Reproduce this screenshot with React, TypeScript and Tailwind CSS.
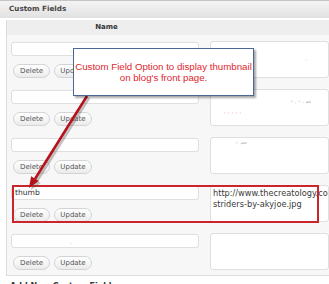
import React from "react";

type Row = {
  name?: string;
  value?: string[];
  nameMark?: string;
  valueMarks?: React.ReactNode;
};

function Button({ label, w }: { label: string; w: string }) {
  return (
    <div
      className={`${w} h-[14px] flex items-center justify-center rounded-full border border-[#d4d4d4] bg-gradient-to-b from-[#ffffff] to-[#ececec] text-[7px] text-[#555]`}
    >
      {label}
    </div>
  );
}

export default function App() {
  const rows: Row[] = [
    {
      nameMark: ".",
      valueMarks: <div className="pl-[94px] pt-[15px] text-[6px] leading-[6px] text-[#aaa]">·</div>,
    },
    {
      valueMarks: (
        <div className="pt-[10px] text-[6px] leading-[6px]">
          <div className="pl-[80px] text-[#999]">'  ·  ʻ  ˑ ᵃᵇ</div>
          <div className="pl-[13px] pt-[4px] text-[#d55]">· · · · ·</div>
        </div>
      ),
    },
    {
      valueMarks: <div className="pl-[25px] pt-[3px] text-[6px] leading-[6px] text-[#999]">'   ·ᵃʷ</div>,
    },
    {
      name: "thumb",
      value: ["http://www.thecreatology.com/", "striders-by-akyjoe.jpg"],
    },
    { nameMark: "." },
  ];

  return (
    <div
      className="relative w-[329px] h-[284px] overflow-hidden bg-[#f9f9f9] text-[#333]"
      style={{ fontFamily: '"DejaVu Sans", Verdana, sans-serif' }}
    >
      <div className="h-[18px] flex items-center px-[9px] border-t border-[#c4c4c4] bg-gradient-to-b from-[#f4f4f4] to-[#e1e1e1]">
        <span className="text-[7.2px] font-bold text-[#464646]">Custom Fields</span>
      </div>

      <div className="pt-[2px] bg-white">
        <div className="ml-[6px] border-l border-b border-[#dcdcdc]">
          <div className="h-[15px] flex bg-[#eeeeee]">
            <div className="w-[199px] flex items-center justify-center text-[7px] font-bold text-[#333]">
              Name
            </div>
          </div>

          <div className="bg-[#f7f7f7]">
            {rows.map((row, i) => (
              <div key={i} className="h-[48px] pt-[6px] flex">
                <div className="w-[192px] pl-[4px]">
                  <div className="mt-[1px] h-[14px] w-[188px] rounded-[3px] border border-[#dfdfdf] bg-white flex items-center px-[3px] text-[7.6px] text-[#333]">
                    {row.name ?? (
                      <span className="pl-[55px] text-[6px] text-[#aaa]">{row.nameMark}</span>
                    )}
                  </div>
                  <div className="mt-[8px] ml-[2px] flex gap-[4px]">
                    <Button label="Delete" w="w-[37px]" />
                    <Button label="Update" w="w-[38px]" />
                  </div>
                </div>
                <div className="ml-[11px] w-[140px] h-[37px] rounded-[3px] border border-[#dfdfdf] bg-white overflow-hidden">
                  {row.value ? (
                    <div className="pl-[2px] pt-[2px] text-[8.2px] leading-[11px] text-[#3a3a3a] whitespace-nowrap">
                      {row.value.map((l) => (
                        <div key={l}>{l}</div>
                      ))}
                    </div>
                  ) : (
                    row.valueMarks
                  )}
                </div>
              </div>
            ))}
          </div>
        </div>
        <div className="pl-[10px] pt-[5px] text-[8px] font-bold text-[#333]">Add New Custom Field:</div>
      </div>

      {/* highlight box */}
      <div className="absolute left-[12px] top-[185px] w-[307px] h-[38px] border-2 border-[#c9252b]" />

      {/* arrow */}
      <svg className="absolute left-0 top-0 pointer-events-none" width="329" height="284">
        <g opacity="0.35" transform="translate(2 2)">
          <line x1="87" y1="96" x2="35" y2="179" stroke="#555" strokeWidth="2.6" />
          <polygon points="29,188 38.7,181.1 31.1,176.3" fill="#555" />
        </g>
        <line x1="87" y1="96" x2="35" y2="179" stroke="#b5121b" strokeWidth="2.6" />
        <polygon points="29,188 38.7,181.1 31.1,176.3" fill="#b5121b" />
      </svg>

      {/* callout */}
      <div
        className="absolute left-[73px] top-[48px] w-[181px] h-[48px] border border-[#4a6796] bg-white shadow-[2px_2px_2px_rgba(0,0,0,0.35)] flex flex-col items-center justify-center text-[9.7px] leading-[11.5px] text-[#e0262d]"
        style={{ fontFamily: '"Liberation Sans", Arial, sans-serif' }}
      >
        <div className="whitespace-nowrap">Custom Field Option to display thumbnail</div>
        <div>on blog's front page.</div>
      </div>
    </div>
  );
}
